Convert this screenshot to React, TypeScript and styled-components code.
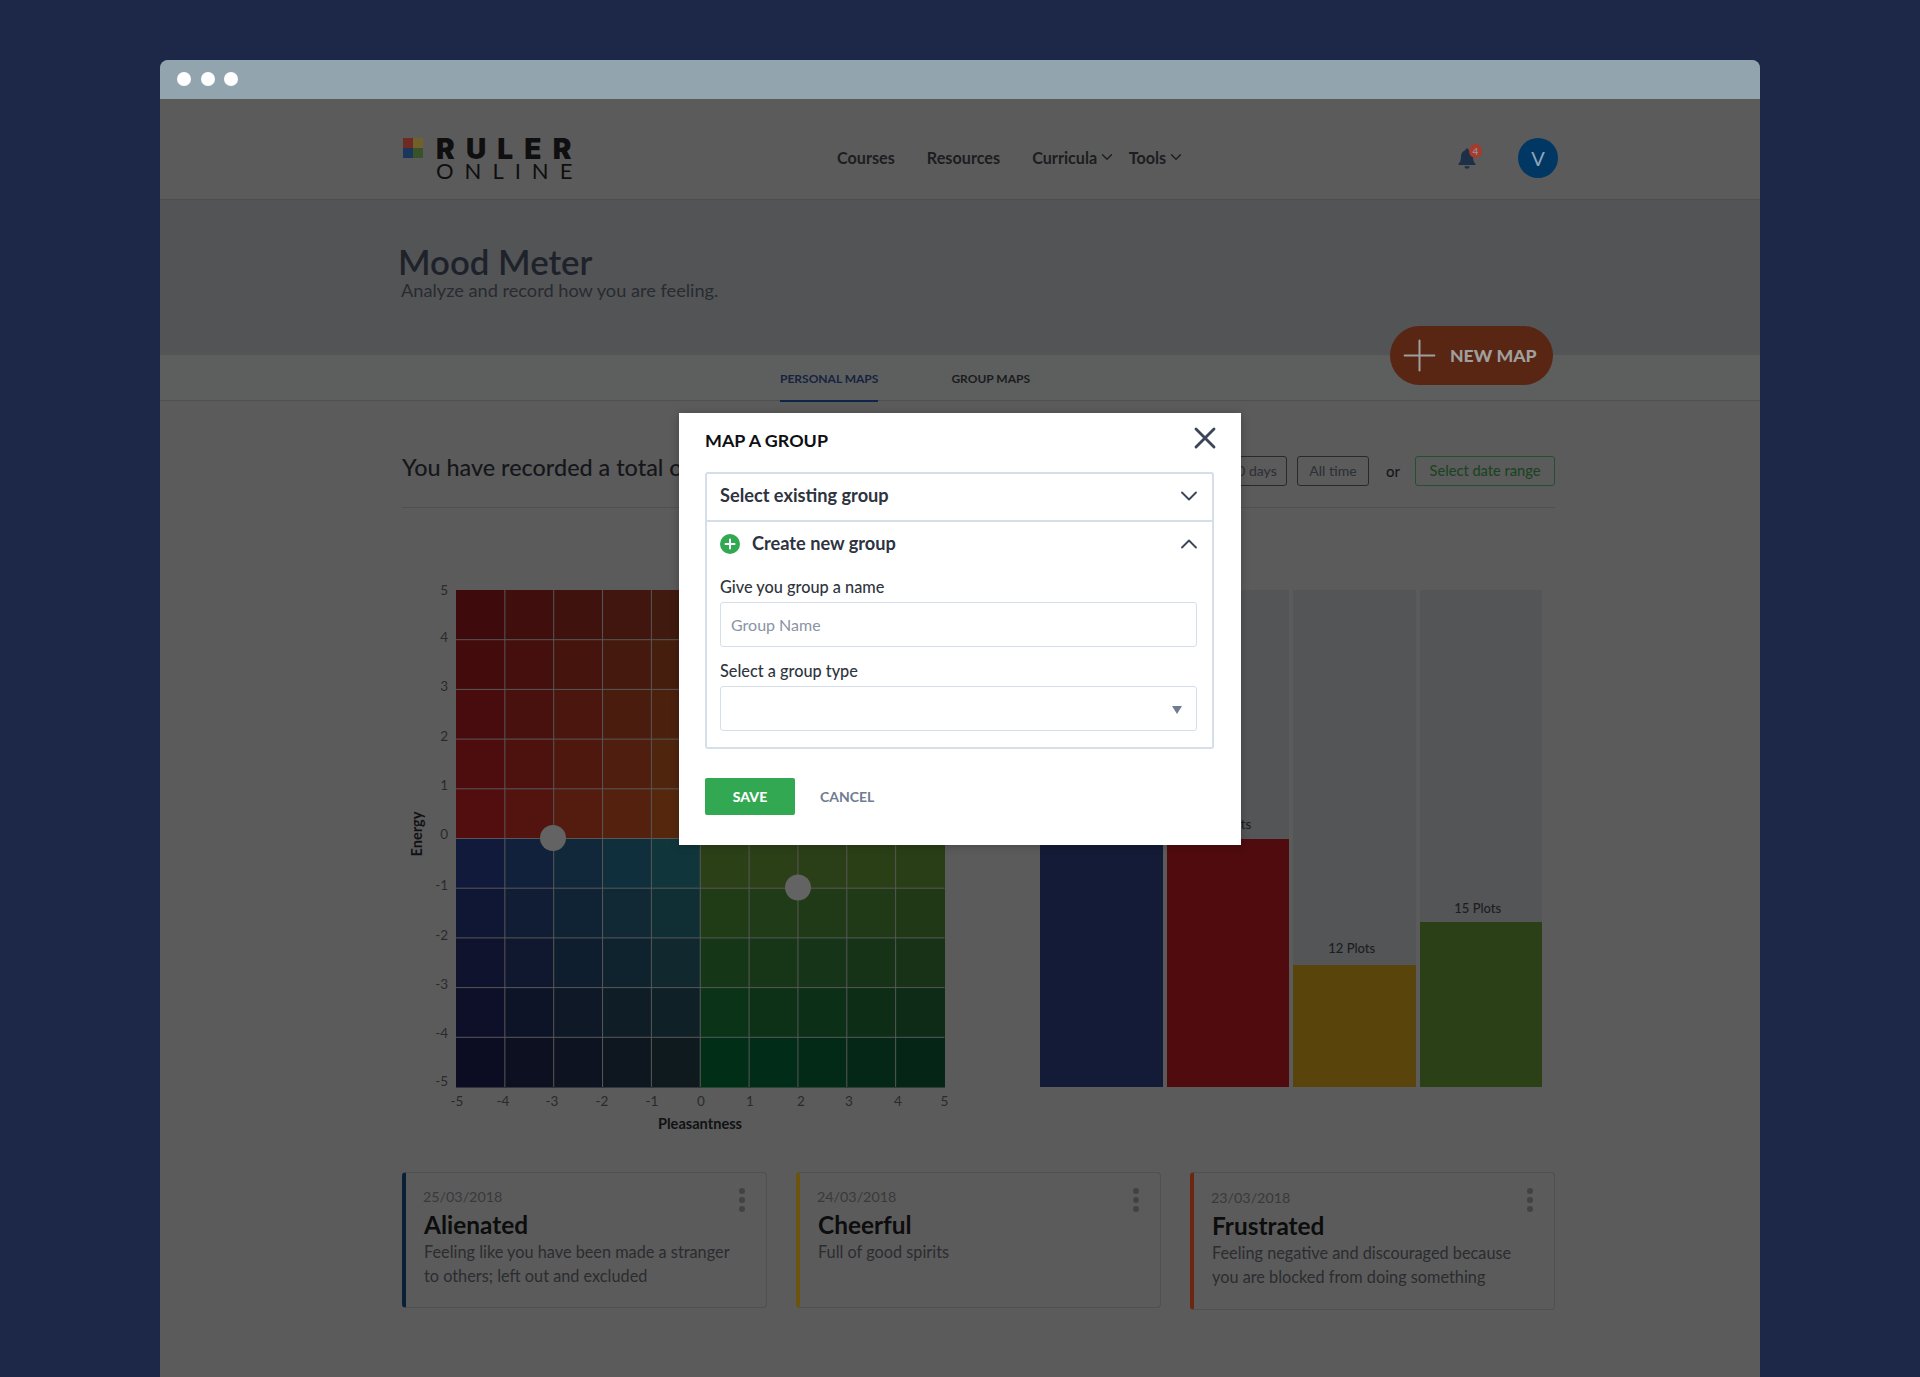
import React from "react";
import styled, { createGlobalStyle } from "styled-components";
import { ChevronDown, ChevronUp, X, Plus } from "lucide-react";

const FONT = `"Lato", "Liberation Sans", sans-serif`;

const Global = createGlobalStyle`
  html, body { margin: 0; padding: 0; height: 1377px; overflow: hidden; background: #1d2849; font-family: ${FONT}; }
  * { box-sizing: border-box; }
`;

const Page = styled.div`
  height: 1377px;
  padding: 60px 160px 0;
`;
const Win = styled.div`
  position: relative;
  width: 1600px;
  height: 1317px;
  background: #5b5b5b;
  border-radius: 8px 8px 0 0;
  overflow: hidden;
`;
const TitleBar = styled.div`
  height: 39px;
  background: #92a5af;
  display: flex;
  align-items: center;
  gap: 9.5px;
  padding: 0 0 1px 17px;
`;
const Dot = styled.span`
  width: 14px;
  height: 14px;
  border-radius: 50%;
  background: #fff;
`;
const Nav = styled.header`
  height: 101px;
  padding: 18px 202px 0 243px;
  display: flex;
  align-items: center;
  border-bottom: 1px solid #4c4e50;
`;
const Logo = styled.div`
  width: 170px;
  display: flex;
  align-items: flex-start;
  gap: 13px;
`;
const LogoMark = styled.svg`
  width: 20px;
  height: 20px;
  flex: none;
`;
const LogoWords = styled.div`
  display: flex;
  flex-direction: column;
  color: #0f0f10;
  white-space: nowrap;
`;
const LogoTop = styled.span`
  margin-top: 1px;
  font-family: "Inter", ${FONT};
  font-size: 28px;
  line-height: 20px;
  font-weight: 900;
  letter-spacing: 11.2px;
`;
const LogoBottom = styled.span`
  margin-top: 4px;
  font-size: 22px;
  line-height: 16px;
  font-weight: 400;
  letter-spacing: 11px;
`;
const NavLinks = styled.nav`
  margin: -2px 0 0 264px;
  display: flex;
  align-items: center;
`;
const NavLink = styled.a<{ $gap: number }>`
  display: flex;
  align-items: center;
  margin-right: ${(p) => p.$gap}px;
  font-size: 16.2px;
  font-weight: 700;
  color: #1c1d20;
  white-space: nowrap;
`;
const NavChevron = styled(ChevronDown)`
  margin: -1px 0 0 1px;
  flex: none;
`;
const NavRight = styled.div`
  margin-left: auto;
  display: flex;
  align-items: center;
  gap: 41px;
`;
const BellWrap = styled.div`
  position: relative;
  width: 20px;
  height: 22px;
`;
const BellIcon = styled.svg`
  width: 20px;
  height: 22px;
  display: block;
`;
const Badge = styled.span`
  position: absolute;
  left: 12px;
  top: -3px;
  width: 13px;
  height: 14px;
  border-radius: 50%;
  background: #a63a2d;
  color: #8f8f8f;
  font-size: 10px;
  font-weight: 700;
  line-height: 14px;
  text-align: center;
`;
const Avatar = styled.div`
  width: 40px;
  height: 40px;
  border-radius: 50%;
  background: #013763;
  color: #8ea6ba;
  font-size: 20px;
  line-height: 40px;
  text-align: center;
`;
const Hero = styled.section`
  position: relative;
  height: 155px;
  background: #535455;
  padding: 42px 0 0 238px;
`;
const HeroTitle = styled.h1`
  margin: 0;
  font-size: 34.8px;
  line-height: 40px;
  font-weight: 600;
  color: #1e222b;
`;
const HeroSub = styled.p`
  margin: -2px 0 0 3px;
  font-size: 18.2px;
  line-height: 20px;
  color: #282b31;
`;
const NewMap = styled.button`
  position: absolute;
  left: 1230px;
  top: 126px;
  width: 163px;
  height: 59px;
  border: 0;
  border-radius: 30px;
  background: #592614;
  display: flex;
  align-items: center;
  gap: 5px;
  padding: 0 0 0 4px;
  color: #9f9f9d;
  font-family: ${FONT};
  font-size: 17.6px;
  font-weight: 900;
  z-index: 1;
`;
const Tabs = styled.div`
  height: 46px;
  background: #5d5e5e;
  border-bottom: 1px solid #4f5051;
  padding-left: 620px;
  display: flex;
  gap: 73px;
`;
const Tab = styled.a<{ $active?: boolean }>`
  height: 47px;
  padding-top: 17px;
  font-size: 12px;
  line-height: 14px;
  font-weight: 700;
  white-space: nowrap;
  color: ${(p) => (p.$active ? "#16233f" : "#1b1c1e")};
  border-bottom: 2px solid ${(p) => (p.$active ? "#0e2549" : "transparent")};
`;
const Main = styled.main`
  padding: 0 205px 0 242px;
`;
const FilterRow = styled.div`
  padding: 55px 0 21px;
  display: flex;
  align-items: center;
  border-bottom: 1px solid #4f5051;
`;
const Total = styled.span`
  flex: 1;
  height: 30px;
  line-height: 22px;
  font-size: 23.4px;
  font-weight: 500;
  color: #15161a;
  white-space: nowrap;
`;
const FilterBtn = styled.span<{ $green?: boolean; $w: number; $after?: number }>`
  width: ${(p) => p.$w}px;
  height: 30px;
  margin-right: ${(p) => p.$after ?? 0}px;
  border: 1px solid ${(p) => (p.$green ? "#255030" : "#27292c")};
  border-radius: 3px;
  font-size: ${(p) => (p.$green ? 14.6 : 14)}px;
  font-weight: 500;
  line-height: 28px;
  text-align: center;
  color: ${(p) => (p.$green ? "#1a4422" : "#2f3136")};
`;
const Or = styled.span`
  margin: 0 15px 0 17px;
  font-size: 15px;
  font-weight: 500;
  color: #17181a;
`;
const ChartRow = styled.div`
  margin-top: 72px;
  display: flex;
  align-items: flex-start;
`;
const Heat = styled.svg`
  width: 560px;
  height: 560px;
  flex: none;
  font-family: ${FONT};
`;
const Bars = styled.div`
  margin: 10px 0 0 78px;
  width: 502px;
  height: 497px;
  display: flex;
  gap: 4px;
`;
const BarCol = styled.div`
  position: relative;
  flex: 1;
  background: #535557;
  display: flex;
  flex-direction: column;
  justify-content: flex-end;
  align-items: flex-start;
`;
const BarLabel = styled.span<{ $rise: number; $inset: number }>`
  width: 100%;
  padding-right: ${(p) => p.$inset}px;
  margin-bottom: ${(p) => p.$rise}px;
  font-size: 13px;
  font-weight: 500;
  line-height: 18px;
  text-align: center;
  color: #1c1d1f;
`;
const BarFill = styled.div<{ $c: string; $h: number }>`
  width: 100%;
  height: ${(p) => p.$h}px;
  background: ${(p) => p.$c};
`;
const Cards = styled.div`
  margin-top: 32px;
  display: flex;
  gap: 29px;
`;
const Card = styled.article<{ $c: string; $shift?: boolean }>`
  position: relative;
  width: 365px;
  height: ${(p) => (p.$shift ? 138 : 136)}px;
  padding: ${(p) => (p.$shift ? 16 : 15)}px 10px 0 18px;
  border: 1px solid #4f5051;
  border-left: 4px solid ${(p) => p.$c};
  border-radius: 4px;
`;
const CardDate = styled.div`
  margin-left: -1px;
  font-size: 14.3px;
  line-height: 18px;
  color: #38393c;
`;
const CardTitle = styled.h3`
  margin: 5px 0 0;
  font-size: 24.4px;
  line-height: 28px;
  font-weight: 700;
  color: #0d0d0e;
`;
const CardText = styled.p`
  margin: 1px 0 0;
  font-size: 16.3px;
  line-height: 24px;
  color: #2b2c2f;
`;
const Kebab = styled.div`
  position: absolute;
  right: 21px;
  top: 15px;
  display: flex;
  flex-direction: column;
  gap: 3px;
`;
const KebabDot = styled.span`
  width: 6px;
  height: 6px;
  border-radius: 50%;
  background: #414243;
`;

const Modal = styled.div`
  position: absolute;
  left: 519px;
  top: 353px;
  width: 562px;
  height: 432px;
  background: #fff;
  padding: 17px 27px 0 26px;
  box-shadow: 0 1px 8px rgba(0, 0, 0, 0.25);
  z-index: 2;
`;
const ModalHead = styled.div`
  height: 42px;
  display: flex;
  justify-content: space-between;
  align-items: flex-start;
`;
const ModalTitle = styled.h2`
  margin: 0;
  font-size: 17.9px;
  line-height: 20px;
  font-weight: 700;
  color: #0e0f12;
`;
const Close = styled(X)`
  margin: -10px -9px 0 0;
  color: #3b4557;
`;
const AccHead = styled.div`
  height: 50px;
  padding: 0 9px 4px 13px;
  border: 2px solid #d6deea;
  border-radius: 3px 3px 0 0;
  display: flex;
  align-items: center;
  justify-content: space-between;
  font-size: 18.2px;
  font-weight: 700;
  color: #2d3340;
`;
const AccBody = styled.div`
  padding: 0 15px 16px 13px;
  border: 2px solid #d6deea;
  border-top: 0;
  border-radius: 0 0 3px 3px;
`;
const AccRow = styled.div`
  height: 44px;
  margin-right: -6px;
  padding-bottom: 2px;
  display: flex;
  align-items: center;
  justify-content: space-between;
  font-size: 18.2px;
  font-weight: 700;
  color: #2d3340;
`;
const AccChevron = styled.span`
  display: flex;
  height: 28px;
  margin-top: 2px;
  color: #3d4656;
`;
const AccLead = styled.span`
  display: flex;
  align-items: center;
  gap: 12px;
`;
const PlusDisc = styled.svg`
  width: 20px;
  height: 20px;
  margin-top: 2px;
`;
const Label = styled.label<{ $top: number }>`
  display: block;
  margin: ${(p) => p.$top}px 0 0;
  font-size: 16.3px;
  line-height: 18px;
  font-weight: 500;
  color: #2f3540;
`;
const TextInput = styled.input`
  display: block;
  width: 100%;
  height: 45px;
  margin-top: 6px;
  padding: 0 10px 1px;
  border: 1px solid #d6deea;
  border-radius: 3px;
  font-family: ${FONT};
  font-size: 16px;
  color: #2f3540;
  &::placeholder { color: #8a93a5; opacity: 1; }
`;
const SelectBox = styled.div`
  height: 45px;
  margin-top: 6px;
  padding-right: 14px;
  border: 1px solid #d6deea;
  border-radius: 3px;
  display: flex;
  align-items: center;
  justify-content: flex-end;
`;
const Caret = styled.svg`
  width: 10px;
  height: 8px;
  margin-top: 2px;
`;
const ModalFoot = styled.div`
  margin-top: 29px;
  display: flex;
  align-items: center;
  gap: 25px;
`;
const Save = styled.button`
  width: 90px;
  height: 37px;
  border: 0;
  border-radius: 2px;
  background: #33a852;
  color: #fff;
  font-family: ${FONT};
  font-size: 14px;
  font-weight: 900;
`;
const Cancel = styled.span`
  font-size: 14px;
  font-weight: 700;
  color: #6f7c91;
`;

function hex(c: string) {
  return [1, 3, 5].map((i) => parseInt(c.slice(i, i + 2), 16));
}
function mix(a: number[], b: number[], t: number) {
  return a.map((v, i) => v + (b[i] - v) * t);
}
function cellColor(q: string[], col: number, row: number) {
  const [tl, tr, bl, br] = q.map(hex);
  const c = mix(mix(tl, tr, col / 4), mix(bl, br, col / 4), row / 4);
  return `rgb(${c.map((v) => Math.round(v)).join(",")})`;
}

const QUADS = [
  { col: 0, row: 0, q: ["#3f0a0c", "#401a0e", "#520d0f", "#55280e"] },
  { col: 5, row: 0, q: ["#4a2a10", "#54440e", "#5c3a0e", "#5b450b"] },
  { col: 0, row: 5, q: ["#111a3a", "#10363c", "#0c0c22", "#0f1a1f"] },
  { col: 5, row: 5, q: ["#2b4017", "#293e16", "#002e17", "#052517"] },
];

const OX = 54;
const OY = 10;
const CW = 48.85;
const CH = 49.7;
const X_LABELS = [
  ["-5", 457], ["-4", 503], ["-3", 552], ["-2", 602], ["-1", 652], ["0", 701],
  ["1", 750], ["2", 801], ["3", 849], ["4", 898], ["5", 944.5],
] as const;
const Y_LABELS = [
  ["5", 589.5], ["4", 637], ["3", 686], ["2", 736], ["1", 785], ["0", 834],
  ["-1", 885], ["-2", 935], ["-3", 984], ["-4", 1033], ["-5", 1081],
] as const;

function Heatmap() {
  const cells: React.ReactNode[] = [];
  QUADS.forEach((d, qi) => {
    for (let r = 0; r < 5; r++)
      for (let c = 0; c < 5; c++)
        cells.push(
          <rect
            key={`${qi}-${r}-${c}`}
            x={OX + (d.col + c) * CW}
            y={OY + (d.row + r) * CH}
            width={CW + 0.5}
            height={CH + 0.5}
            fill={cellColor(d.q, c, r)}
          />
        );
  });
  const lines: React.ReactNode[] = [];
  for (let i = 1; i < 10; i++) {
    lines.push(<line key={`v${i}`} x1={OX + i * CW} x2={OX + i * CW} y1={OY} y2={OY + 10 * CH} stroke="#585858" strokeWidth="1" />);
    lines.push(<line key={`h${i}`} x1={OX} x2={OX + 10 * CW} y1={OY + i * CH} y2={OY + i * CH} stroke="#585858" strokeWidth="1" />);
  }
  return (
    <Heat viewBox="0 0 560 560">
      {cells}
      {lines}
      <circle cx={151} cy={258} r={13} fill="#636363" />
      <circle cx={396} cy={307.5} r={13} fill="#636363" />
      {X_LABELS.map(([t, x]) => (
        <text key={`x${t}`} x={x - 402} y={526} fontSize="13.5" fill="#292a2d" textAnchor="middle">{t}</text>
      ))}
      {Y_LABELS.map(([t, y]) => (
        <text key={`y${t}`} x={46} y={y - 580 + 5} fontSize="13.5" fill="#292a2d" textAnchor="end">{t}</text>
      ))}
      <text x={298} y={549} fontSize="14.6" fontWeight="700" fill="#111214" textAnchor="middle">Pleasantness</text>
      <text transform="translate(20 254) rotate(-90)" fontSize="14.6" fontWeight="700" fill="#111214" textAnchor="middle">Energy</text>
    </Heat>
  );
}

const BARS = [
  { c: "#131b36", h: 249, label: "", rise: 0, inset: 0 },
  { c: "#4f0b0e", h: 248, label: "22 Plots", rise: 6, inset: 0 },
  { c: "#59440b", h: 122, label: "12 Plots", rise: 8, inset: 5 },
  { c: "#2b4016", h: 165, label: "15 Plots", rise: 5, inset: 6 },
];

const CARDS = [
  { c: "#0a2038", date: "25/03/2018", title: "Alienated", text: ["Feeling like you have been made a stranger", "to others; left out and excluded"] },
  { c: "#6c540e", date: "24/03/2018", title: "Cheerful", text: ["Full of good spirits"] },
  { c: "#6c2510", date: "23/03/2018", title: "Frustrated", text: ["Feeling negative and discouraged because", "you are blocked from doing something"], shift: true },
];

export default function App() {
  return (
    <Page>
      <Global />
      <Win>
        <TitleBar><Dot /><Dot /><Dot /></TitleBar>
        <Nav>
          <Logo>
            <LogoMark viewBox="0 0 20 20">
              <rect width="10" height="10" fill="#6e2a25" />
              <rect x="10" width="10" height="10" fill="#72602a" />
              <rect y="10" width="10" height="10" fill="#1a365c" />
              <rect x="10" y="10" width="10" height="10" fill="#38522a" />
            </LogoMark>
            <LogoWords>
              <LogoTop>RULER</LogoTop>
              <LogoBottom>ONLINE</LogoBottom>
            </LogoWords>
          </Logo>
          <NavLinks>
            <NavLink $gap={32}>Courses</NavLink>
            <NavLink $gap={32}>Resources</NavLink>
            <NavLink $gap={12.5}>Curricula<NavChevron size={18} strokeWidth={1.8} /></NavLink>
            <NavLink $gap={0}>Tools<NavChevron size={18} strokeWidth={1.8} /></NavLink>
          </NavLinks>
          <NavRight>
            <BellWrap>
              <BellIcon viewBox="0 0 20 22">
                <path d="M10 1.5c-1 0-1.7.7-1.7 1.7C5.500 4 4 6.400 4 9.500c0 3.500-.8 5.600-2.500 7.300v1.200h17v-1.200C16.800 15.100 16 13 16 9.500c0-3.100-1.500-5.500-4.300-6.300 0-1-.7-1.700-1.700-1.700z" fill="#1e3048" />
                <path d="M7.500 19.200a2.500 2.500 0 0 0 5 0z" fill="#1e3048" />
              </BellIcon>
              <Badge>4</Badge>
            </BellWrap>
            <Avatar>V</Avatar>
          </NavRight>
        </Nav>
        <Hero>
          <HeroTitle>Mood Meter</HeroTitle>
          <HeroSub>Analyze and record how you are feeling.</HeroSub>
          <NewMap><Plus size={51} strokeWidth={0.95} />NEW MAP</NewMap>
        </Hero>
        <Tabs>
          <Tab $active>PERSONAL MAPS</Tab>
          <Tab>GROUP MAPS</Tab>
        </Tabs>
        <Main>
          <FilterRow>
            <Total>You have recorded a total of 47 plots in the last 30 days</Total>
            <FilterBtn $w={68} $after={10}>30 days</FilterBtn>
            <FilterBtn $w={72}>All time</FilterBtn>
            <Or>or</Or>
            <FilterBtn $green $w={140}>Select date range</FilterBtn>
          </FilterRow>
          <ChartRow>
            <Heatmap />
            <Bars>
              {BARS.map((b, i) => (
                <BarCol key={i}>
                  {b.label && <BarLabel $rise={b.rise} $inset={b.inset}>{b.label}</BarLabel>}
                  <BarFill $c={b.c} $h={b.h} />
                </BarCol>
              ))}
            </Bars>
          </ChartRow>
          <Cards>
            {CARDS.map((c) => (
              <Card key={c.title} $c={c.c} $shift={c.shift}>
                <CardDate>{c.date}</CardDate>
                <CardTitle>{c.title}</CardTitle>
                <CardText>{c.text[0]}{c.text[1] && <br />}{c.text[1]}</CardText>
                <Kebab><KebabDot /><KebabDot /><KebabDot /></Kebab>
              </Card>
            ))}
          </Cards>
        </Main>
        <Modal>
          <ModalHead>
            <ModalTitle>MAP A GROUP</ModalTitle>
            <Close size={36} strokeWidth={1.9} />
          </ModalHead>
          <AccHead>Select existing group <AccChevron><ChevronDown size={28} strokeWidth={1.6} /></AccChevron></AccHead>
          <AccBody>
            <AccRow>
              <AccLead>
                <PlusDisc viewBox="0 0 20 20">
                  <circle cx="10" cy="10" r="10" fill="#33a852" />
                  <path d="M10 5.500v9M5.500 10h9" stroke="#fff" strokeWidth="2" strokeLinecap="round" />
                </PlusDisc>
                Create new group
              </AccLead>
              <AccChevron><ChevronUp size={28} strokeWidth={1.6} /></AccChevron>
            </AccRow>
            <Label $top={12}>Give you group a name</Label>
            <TextInput placeholder="Group Name" readOnly />
            <Label $top={15}>Select a group type</Label>
            <SelectBox>
              <Caret viewBox="0 0 10 8"><path d="M0 0h10L5 8z" fill="#6f7c91" /></Caret>
            </SelectBox>
          </AccBody>
          <ModalFoot>
            <Save>SAVE</Save>
            <Cancel>CANCEL</Cancel>
          </ModalFoot>
        </Modal>
      </Win>
    </Page>
  );
}
